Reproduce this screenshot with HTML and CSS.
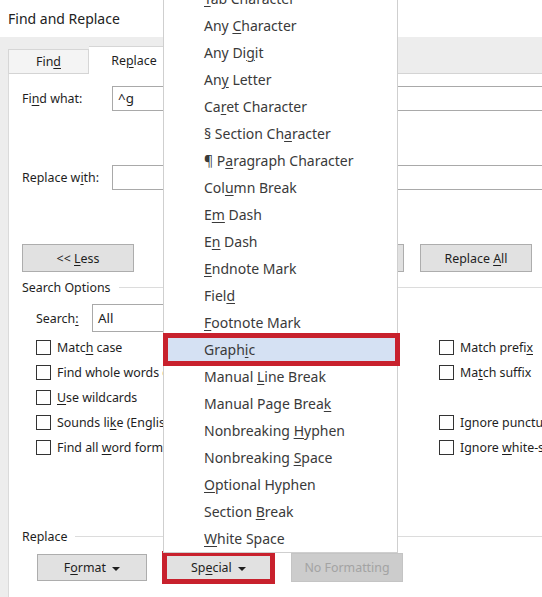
FILE: index.html
```html
<!DOCTYPE html>
<html lang="en">
<head>
  <meta charset="UTF-8" />
  <title>Find and Replace</title>
  <link rel="stylesheet" href="styles.css">
</head>
<body>
  <div class="titlebar">Find and Replace</div>

  <div class="dialog">
    <div class="tabs">
      <div class="tab">Fin<u>d</u></div>
      <div class="tab active">Re<u>p</u>lace</div>
    </div>

    <div class="panel">
      <div class="field first">
        <label>Fi<u>n</u>d what:</label>
        <div class="input">^g</div>
      </div>
      <div class="field second">
        <label>Replace w<u>i</u>th:</label>
        <div class="input"></div>
      </div>

      <div class="actions">
        <button class="btn">&lt;&lt; <u>L</u>ess</button>
        <div class="spacer"></div>
        <button class="btn"><u>R</u>eplace</button>
        <button class="btn">Replace <u>A</u>ll</button>
        <button class="btn"><u>F</u>ind Next</button>
      </div>

      <div class="group-title">Search Options</div>

      <div class="search-row">
        <label>Search<u>:</u></label>
        <div class="select">All</div>
      </div>

      <div class="options">
        <div class="check"><span class="box"></span><span>Matc<u>h</u> case</span></div>
        <div class="check"><span class="box"></span><span>Match prefi<u>x</u></span></div>
        <div class="check"><span class="box"></span><span>Find whole words onl<u>y</u></span></div>
        <div class="check"><span class="box"></span><span>Ma<u>t</u>ch suffix</span></div>
        <div class="check"><span class="box"></span><span><u>U</u>se wildcards</span></div>
        <div class="check"></div>
        <div class="check"><span class="box"></span><span>Sounds li<u>k</u>e (English)</span></div>
        <div class="check"><span class="box"></span><span>Ignore punctuation characters</span></div>
        <div class="check"><span class="box"></span><span>Find all <u>w</u>ord forms (English)</span></div>
        <div class="check"><span class="box"></span><span>Ignore <u>w</u>hite-space characters</span></div>
      </div>

      <div class="group-title replace-title">Replace</div>

      <div class="bottom">
        <button class="btn small">F<u>o</u>rmat <span class="caret"></span></button>
        <button class="btn small marked">Sp<u>e</u>cial <span class="caret"></span></button>
        <button class="btn small disabled">No Formatting</button>
      </div>
    </div>
  </div>

  <ul class="menu">
    <li><u>T</u>ab Character</li>
    <li>Any <u>C</u>haracter</li>
    <li>Any Di<u>g</u>it</li>
    <li>An<u>y</u> Letter</li>
    <li>Ca<u>r</u>et Character</li>
    <li>§ Section Ch<u>a</u>racter</li>
    <li>¶ P<u>a</u>ragraph Character</li>
    <li>Col<u>u</u>mn Break</li>
    <li>E<u>m</u> Dash</li>
    <li>E<u>n</u> Dash</li>
    <li><u>E</u>ndnote Mark</li>
    <li>Fiel<u>d</u></li>
    <li><u>F</u>ootnote Mark</li>
    <li class="selected">Graph<u>i</u>c</li>
    <li>Manual <u>L</u>ine Break</li>
    <li>Manual Page Brea<u>k</u></li>
    <li>Nonbreaking <u>H</u>yphen</li>
    <li>Nonbreaking <u>S</u>pace</li>
    <li><u>O</u>ptional Hyphen</li>
    <li>Section <u>B</u>reak</li>
    <li><u>W</u>hite Space</li>
  </ul>
</body>
</html>
```

FILE: styles.css
```css
body {
  margin: 0;
  width: 542px;
  height: 597px;
  overflow: hidden;
  position: relative;
  background-color: #ededed;
  font-family: "Noto Sans", sans-serif;
  font-size: 12.4px;
  color: #1e1e1e;
}

u {
  text-decoration-thickness: 1px;
  text-underline-offset: 2px;
}

.titlebar {
  height: 37px;
  background-color: #fff;
  padding-left: 8px;
  font-size: 14px;
  line-height: 37px;
  color: #222;
}

.dialog {
  padding-left: 8px;
}

.tabs {
  display: flex;
  align-items: flex-end;
  height: 36px;
}

.tab {
  width: 79px;
  height: 23px;
  line-height: 23px;
  text-align: center;
  background-color: #f4f4f4;
  border: 1px solid #d6d6d6;
  border-bottom: none;
}

.tab.active {
  width: 90px;
  height: 27px;
  line-height: 28px;
  background-color: #fff;
  border-left: none;
  margin-bottom: -1px;
  position: relative;
}

.panel {
  width: 700px;
  height: 530px;
  background-color: #fff;
  border-top: 1px solid #d4d4d4;
  border-left: 1px solid #dadada;
  padding-left: 13px;
}

.field {
  display: flex;
  align-items: center;
  height: 25px;
}

.field.first {
  padding-top: 12px;
}

.field.second {
  margin-top: 54px;
}

.field label {
  width: 90px;
}

.input {
  flex: 1;
  height: 23px;
  line-height: 23px;
  border: 1px solid #a9a9a9;
  padding-left: 5px;
  font-size: 13.4px;
}

.actions {
  display: flex;
  gap: 16px;
  margin-top: 54px;
}

.spacer {
  width: 126px;
}

.btn {
  width: 112px;
  height: 28px;
  border: 1px solid #adadad;
  background-color: #e1e1e1;
  font-family: inherit;
  font-size: 12.4px;
  color: #1e1e1e;
  padding: 0;
}

.group-title {
  display: flex;
  align-items: center;
  gap: 8px;
  height: 18px;
  margin-top: 6px;
}

.group-title::after {
  content: "";
  flex: 1;
  border-top: 1px solid #dcdcdc;
}

.search-row {
  display: flex;
  align-items: center;
  margin-top: 8px;
  padding-left: 14px;
}

.search-row label {
  width: 56px;
}

.select {
  width: 200px;
  height: 26px;
  line-height: 26px;
  border: 1px solid #a9a9a9;
  padding-left: 5px;
  font-size: 13.4px;
}

.options {
  display: grid;
  grid-template-columns: 403px 1fr;
  grid-auto-rows: 25px;
  padding-left: 14px;
  margin-top: 3px;
}

.check {
  display: flex;
  align-items: center;
  gap: 6px;
  white-space: nowrap;
}

.box {
  width: 13px;
  height: 13px;
  border: 1px solid #333;
  background-color: #fff;
  flex-shrink: 0;
}

.replace-title {
  margin-top: 67px;
}

.bottom {
  display: flex;
  align-items: center;
  gap: 16px;
  margin-top: 6px;
  padding-left: 15px;
}

.btn.small {
  width: 110px;
  height: 27px;
}

.btn.marked {
  width: 113px;
  height: 33px;
  border: 5px solid #c8212d;
  margin-left: -1px;
}

.btn.disabled {
  width: 112px;
  height: 29px;
  background-color: #cccccc;
  border-color: #c4c4c4;
  color: #a3a3a3;
}

.caret {
  display: inline-block;
  width: 0;
  height: 0;
  border-left: 4px solid transparent;
  border-right: 4px solid transparent;
  border-top: 4px solid #1e1e1e;
  vertical-align: middle;
  margin-left: 3px;
}

/* popup list of the Special button */
.menu {
  position: absolute;
  left: 163px;
  top: -15px;
  width: 233px;
  margin: 0;
  padding: 0;
  list-style: none;
  background-color: #fff;
  border: 1px solid #cfcfcf;
  border-top: none;
  font-size: 14px;
  color: #3a3a3a;
}

.menu li {
  height: 27px;
  line-height: 27px;
  padding-left: 40px;
  white-space: nowrap;
}

.menu li.selected {
  position: relative;
  background-color: #d5e1f3;
}

.menu li.selected::after {
  content: "";
  position: absolute;
  left: -1px;
  right: -3px;
  top: -3px;
  bottom: -3px;
  border: 5px solid #c8212d;
}
```
